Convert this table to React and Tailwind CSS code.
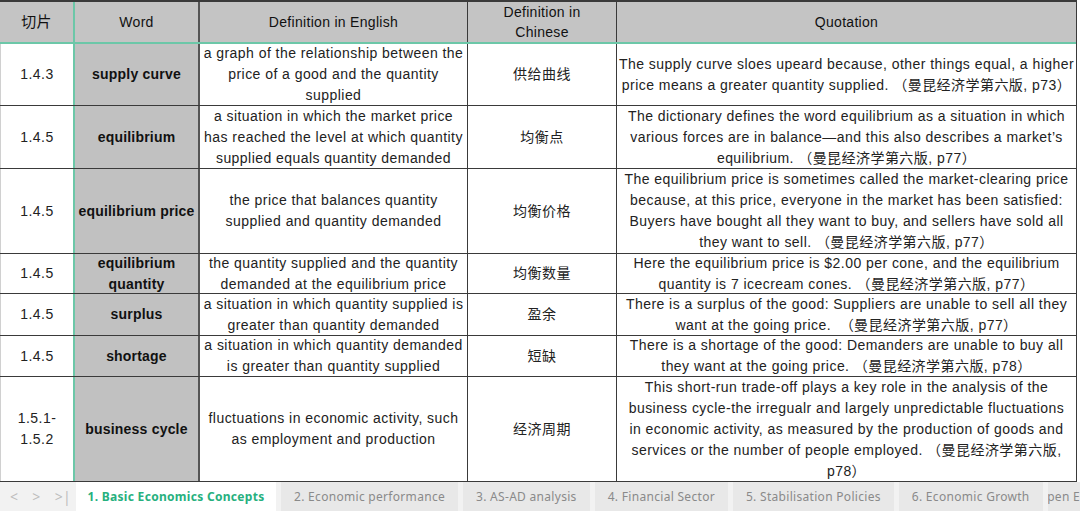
import React from 'react';

const cols = ['切片', 'Word', 'Definition in English', 'Definition in Chinese', 'Quotation'];

const rows = [
  {
    h: 'h-[62px]',
    id: ['1.4.3'],
    word: ['supply curve'],
    en: ['a graph of the relationship between the', 'price of a good and the quantity', 'supplied'],
    zh: '供给曲线',
    quote: ['The supply curve sloes upeard because, other things equal, a higher', 'price means a greater quantity supplied. （曼昆经济学第六版, p73）'],
  },
  {
    h: 'h-[63px]',
    id: ['1.4.5'],
    word: ['equilibrium'],
    en: ['a situation in which the market price', 'has reached the level at which quantity', 'supplied equals quantity demanded'],
    zh: '均衡点',
    quote: ['The dictionary defines the word equilibrium as a situation in which', 'various forces are in balance—and this also describes a market\u2019s', 'equilibrium. （曼昆经济学第六版, p77）'],
  },
  {
    h: 'h-[85px]',
    id: ['1.4.5'],
    word: ['equilibrium price'],
    en: ['the price that balances quantity', 'supplied and quantity demanded'],
    zh: '均衡价格',
    quote: ['The equilibrium price is sometimes called the market-clearing price', 'because, at this price, everyone in the market has been satisfied:', 'Buyers have bought all they want to buy, and sellers have sold all', 'they want to sell. （曼昆经济学第六版, p77）'],
  },
  {
    h: 'h-[40px]',
    id: ['1.4.5'],
    word: ['equilibrium', 'quantity'],
    en: ['the quantity supplied and the quantity', 'demanded at the equilibrium price'],
    zh: '均衡数量',
    quote: ['Here the equilibrium price is $2.00 per cone, and the equilibrium', 'quantity is 7 icecream cones. （曼昆经济学第六版, p77）'],
  },
  {
    h: 'h-[42px]',
    id: ['1.4.5'],
    word: ['surplus'],
    en: ['a situation in which quantity supplied is', 'greater than quantity demanded'],
    zh: '盈余',
    quote: ['There is a surplus of the good: Suppliers are unable to sell all they', 'want at the going price.  （曼昆经济学第六版, p77）'],
  },
  {
    h: 'h-[41px]',
    id: ['1.4.5'],
    word: ['shortage'],
    en: ['a situation in which quantity demanded', 'is greater than quantity supplied'],
    zh: '短缺',
    quote: ['There is a shortage of the good: Demanders are unable to buy all', 'they want at the going price. （曼昆经济学第六版, p78）'],
  },
  {
    h: 'h-[105px]',
    id: ['1.5.1-', '1.5.2'],
    word: ['business cycle'],
    en: ['fluctuations in economic activity, such', 'as employment and production'],
    zh: '经济周期',
    quote: ['This short-run trade-off plays a key role in the analysis of the', 'business cycle-the irregualr and largely unpredictable fluctuations', 'in economic activity, as measured by the production of goods and', 'services or the number of people employed. （曼昆经济学第六版,', 'p78）'],
  },
];

const tabs = [
  '2. Economic performance',
  '3. AS-AD analysis',
  '4. Financial Sector',
  '5. Stabilisation Policies',
  '6. Economic Growth',
];

const Lines = ({ lines, className = '' }) => (
  <div className={'flex flex-col items-center ' + className}>
    {lines.map((l, i) => (
      <span key={i} className="whitespace-pre leading-[21px]">{l}</span>
    ))}
  </div>
);

export default function App() {
  return (
    <div className="w-[1080px] h-[511px] overflow-hidden bg-white text-[14px] text-[#222] font-['Liberation_Sans','Noto_Sans_CJK_SC',sans-serif] tracking-[0.45px]">
      <div className="w-[1077px] border-t-2 border-[#3a3a3a] border-r border-r-[#3a3a3a]">
        {/* header */}
        <div className="flex h-[42px] bg-[#c4c4c4] border-b-2 border-[#6cc7a8] text-[#111] tracking-[0.3px]">
          <div className="w-[75px] flex items-center justify-center border-r-2 border-[#6cc7a8] text-[15px]">{cols[0]}</div>
          <div className="w-[125px] flex items-center justify-center border-r-2 border-[#555]">{cols[1]}</div>
          <div className="w-[268px] flex items-center justify-center border-r border-[#3a3a3a]">{cols[2]}</div>
          <div className="w-[149px] flex flex-col items-center justify-center border-r border-[#3a3a3a] leading-[20px]">
            <span>Definition in</span>
            <span>Chinese</span>
          </div>
          <div className="flex-1 flex items-center justify-center">{cols[4]}</div>
        </div>
        {/* body */}
        {rows.map((r, i) => (
          <div key={i} className={'flex border-b border-[#3a3a3a] ' + r.h}>
            <div className="w-[75px] flex items-center justify-center border-r-2 border-[#6cc7a8] border-l border-l-[#d0d0d0]">
              <Lines lines={r.id} className="leading-[19px]" />
            </div>
            <div className="w-[125px] flex items-center justify-center bg-[#c1c1c1] border-r-2 border-[#555] font-bold text-[#111] tracking-[0.2px]">
              <Lines lines={r.word} />
            </div>
            <div className="w-[268px] flex items-center justify-center border-r border-[#3a3a3a]">
              <Lines lines={r.en} />
            </div>
            <div className="w-[149px] flex items-center justify-center border-r border-[#3a3a3a]">{r.zh}</div>
            <div className="flex-1 flex items-center justify-center">
              <Lines lines={r.quote} />
            </div>
          </div>
        ))}
      </div>
      {/* sheet tabs */}
      <div className="flex items-stretch h-[29px] overflow-hidden bg-[#f2f2f2] text-[12px] tracking-[0.3px] font-['Noto_Sans','Liberation_Sans',sans-serif]">
        <div className="w-[76px] shrink-0 flex items-center gap-[14px] pl-[10px] text-[#bdbdbd] text-[14px]">
          <span>&lt;</span>
          <span>&gt;</span>
          <span>&gt;|</span>
        </div>
        <div className="w-[200px] shrink-0 bg-white flex items-center justify-center text-[#27b07e] font-bold">1. Basic Economics Concepts</div>
        {tabs.map((t) => (
          <div key={t} className="shrink-0 ml-[5px] px-[13px] bg-[#e8e8e8] flex items-center text-[#8a8a8a] whitespace-nowrap">{t}</div>
        ))}
        <div className="flex-1 min-w-0 ml-[5px] bg-[#e8e8e8] flex items-center justify-end overflow-hidden text-[#8a8a8a] whitespace-nowrap">
          <span className="shrink-0">Open E</span>
        </div>
      </div>
    </div>
  );
}
